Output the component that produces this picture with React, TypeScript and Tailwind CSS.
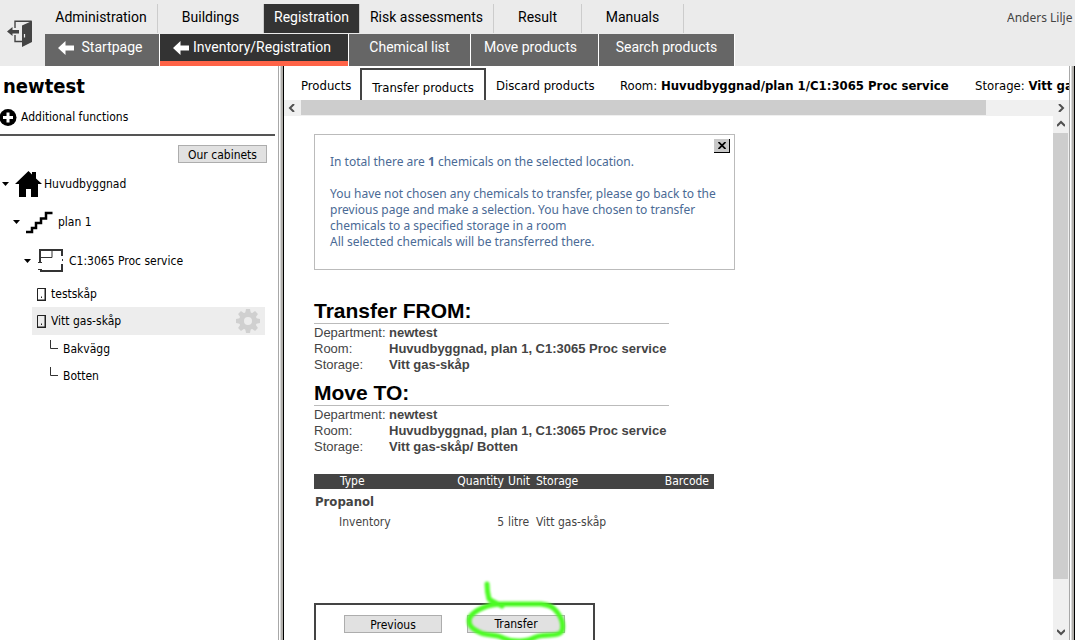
import clsx from "clsx";

const mainTabs = [
  { label: "Administration", width: "w-[113px]" },
  { label: "Buildings", width: "w-[106px]" },
  { label: "Registration", width: "w-[96px]", active: true },
  { label: "Risk assessments", width: "w-[134px]" },
  { label: "Result", width: "w-[88px]" },
  { label: "Manuals", width: "w-[102px]" },
];

const subTabs = [
  { label: "Startpage", width: "w-[115px]", arrow: "gap-2 pr-1" },
  {
    label: "Inventory/Registration",
    width: "w-[189px]",
    arrow: "gap-1 pr-1",
    active: true,
  },
  { label: "Chemical list", width: "w-[122px]" },
  { label: "Move products", width: "w-[128px] pr-2" },
  { label: "Search products", width: "w-[136px]" },
];

const transfers = [
  {
    title: "Transfer FROM:",
    rows: [
      ["Department:", "newtest"],
      ["Room:", "Huvudbyggnad, plan 1, C1:3065 Proc service"],
      ["Storage:", "Vitt gas-skåp"],
    ],
  },
  {
    title: "Move TO:",
    rows: [
      ["Department:", "newtest"],
      ["Room:", "Huvudbyggnad, plan 1, C1:3065 Proc service"],
      ["Storage:", "Vitt gas-skåp/ Botten"],
    ],
  },
];

const gearTeeth = [0, 45, 90, 135, 180, 225, 270, 315];

const ExitIcon = () => (
  <svg width="25" height="27" viewBox="0 0 25 27" fill="#444">
    <path
      d="M8 8V1.200h16V4M8 15v6.500h7"
      fill="none"
      stroke="#444"
      strokeWidth="1.400"
    />
    <path d="M15 5.500 25 1v21l-10 5z" />
    <path d="M0 11.500 5.500 7v3H12v3.500H5.500V16z" />
    <path d="M17.500 14v3.500" stroke="#eee" strokeWidth="1.200" />
  </svg>
);

const BackArrow = () => (
  <svg
    width="16"
    height="14"
    viewBox="0 0 16 14"
    fill="#fff"
    className="mt-1 shrink-0"
  >
    <path d="M0 7 7.500 0v4.500H16v5H7.500V14z" />
  </svg>
);

const PlusIcon = () => (
  <svg width="17" height="17" viewBox="0 0 17 17" className="shrink-0">
    <circle cx="8" cy="8.500" r="8.500" />
    <path d="M8 3.500v10M3 8.500h10" stroke="#fff" strokeWidth="3" />
  </svg>
);

const GearIcon = () => (
  <svg width="24" height="24" viewBox="0 0 24 24" fill="#d0d0d0">
    {gearTeeth.map((angle) => (
      <path
        key={angle}
        d="M9 5 10 0h4l1 5z"
        transform={`rotate(${angle} 12 12)`}
      />
    ))}
    <circle cx="12" cy="12" r="6.500" fill="none" stroke="#d0d0d0" strokeWidth="5" />
  </svg>
);

const HouseIcon = () => (
  <svg width="27" height="26" viewBox="0 0 27 26">
    <path d="M13.500 0 17 3.500V1h4v6.500l6 5.500h-4v13h-7v-8h-5v8H4V13H0z" />
  </svg>
);

const StairsIcon = () => (
  <svg width="27" height="23" viewBox="0 0 27 23">
    <path
      d="M0 21h6v-4h4v-5h5V7.500h5V2h6.500"
      fill="none"
      stroke="#000"
      strokeWidth="2.500"
    />
  </svg>
);

const RoomIcon = () => (
  <svg width="26" height="24" viewBox="0 0 26 24" fill="none" stroke="#333">
    <path d="M2 14V1h22v6M24 15v7H2" strokeWidth="2" />
    <path d="M2 8.500h12V2M0 13.500h4M0 20.500h4M24.500 10v2" />
  </svg>
);

const CabinetIcon = () => (
  <svg width="9" height="13" viewBox="0 0 9 13" fill="none" stroke="#222">
    <path d="M.5.5h7.500v11.500H.5z" />
    <path d="M8.500 0v12.500M0 12.500h9M4.500 8.500v1.500" />
  </svg>
);

const BranchIcon = () => (
  <svg width="8" height="9" viewBox="0 0 8 9" fill="none" stroke="#333">
    <path d="M.5 0v8.500H8" />
  </svg>
);

const Caret = () => (
  <svg width="7" height="4" viewBox="0 0 7 4">
    <path d="M0 0h7L3.500 4z" />
  </svg>
);

const Chevron = ({ d, label }: { d: string; label: string }) => (
  <button
    aria-label={label}
    className="flex size-4 shrink-0 items-center justify-center bg-[#f0f0f0]"
  >
    <svg width="8" height="8" viewBox="0 0 8 8" fill="none">
      <path d={d} stroke="#505050" strokeWidth="2" />
    </svg>
  </button>
);

const Header = () => (
  <header className="flex h-[66px] shrink-0 overflow-hidden bg-[#ebebeb] font-[Roboto,sans-serif] text-sm">
    <button aria-label="Log out" className="w-[45px] shrink-0 pl-[7px]">
      <ExitIcon />
    </button>
    <nav className="shrink-0 pt-1">
      <div className="flex h-[29px]">
        {mainTabs.map((tab) => (
          <a
            key={tab.label}
            href="#"
            className={clsx(
              "flex items-center justify-center border-r border-[#ccc] pb-1",
              tab.width,
              tab.active ? "bg-[#333] text-white" : "text-black"
            )}
          >
            {tab.label}
          </a>
        ))}
      </div>
      <div className="mt-px flex h-8">
        {subTabs.map((tab) => (
          <a
            key={tab.label}
            href="#"
            className={clsx(
              "flex items-start justify-center border-r border-white pt-[3px] text-white",
              tab.width,
              tab.arrow,
              tab.active
                ? "bg-[#333] shadow-[inset_0_-5px_0_#ff6347]"
                : "bg-[#666]"
            )}
          >
            {tab.arrow && <BackArrow />}
            {tab.label}
          </a>
        ))}
      </div>
    </nav>
    <div className="ml-auto w-[68px] overflow-hidden pt-[10px] font-[Noto_Sans,sans-serif] text-xs leading-4 whitespace-nowrap text-[#444]">
      Anders Lilje
    </div>
  </header>
);

const Sidebar = () => (
  <aside className="w-[278px] shrink-0">
    <h1 className="pt-2 pl-[3px] text-xl leading-6 font-bold">newtest</h1>
    <a href="#" className="mt-[11px] flex h-4 items-center gap-1">
      <PlusIcon />
      Additional functions
    </a>
    <hr className="mt-[9px] mr-[3px] border-t-2 border-[#555]" />
    <div className="flex justify-end pt-[9px] pr-[11px]">
      <button className="h-[18px] w-[89px] border border-[#adadad] bg-[#e1e1e1] leading-[18px]">
        Our cabinets
      </button>
    </div>
    <ul className="pt-0.5 pr-[13px]">
      <li className="flex h-[38px] items-center pl-0.5">
        <Caret />
        <span className="mr-0.5 ml-[6px]">
          <HouseIcon />
        </span>
        Huvudbyggnad
      </li>
      <li className="flex h-[38px] items-center pl-[13px]">
        <Caret />
        <span className="mr-[5px] ml-[6px]">
          <StairsIcon />
        </span>
        plan 1
      </li>
      <li className="flex h-10 items-center pl-6">
        <Caret />
        <span className="mr-[5px] ml-[7px]">
          <RoomIcon />
        </span>
        C1:3065 Proc service
      </li>
      <li className="flex h-[26px] items-center gap-[5px] pl-[37px]">
        <CabinetIcon />
        testskåp
      </li>
      <li className="ml-8 flex h-7 items-center gap-[5px] bg-[#ededed] pr-[5px] pl-[5px]">
        <CabinetIcon />
        Vitt gas-skåp
        <button aria-label="Settings" className="ml-auto">
          <GearIcon />
        </button>
      </li>
      <li className="flex h-7 items-center gap-[5px] pl-[50px]">
        <span className="mb-2.5">
          <BranchIcon />
        </span>
        Bakvägg
      </li>
      <li className="flex h-[26px] items-center gap-[5px] pl-[50px]">
        <span className="mb-2.5">
          <BranchIcon />
        </span>
        Botten
      </li>
    </ul>
  </aside>
);

const FrameEdge = () => (
  <div className="flex w-[6px] shrink-0 border-r border-black">
    <div className="w-px bg-[#a8a8a8]" />
    <div className="w-px bg-white" />
    <div className="w-px bg-[#d8d8d8]" />
    <div className="grow bg-[#b0aeaa]" />
  </div>
);

const ProductTabs = () => (
  <nav className="flex h-[34px] shrink-0 overflow-hidden text-[13px] whitespace-nowrap">
    <a href="#" className="w-[76px] shrink-0 pt-3 pl-[17px] leading-4">
      Products
    </a>
    <a
      href="#"
      className="mt-0.5 w-[126px] shrink-0 border-2 border-b-0 border-[#444] pt-[10px] text-center leading-4"
    >
      Transfer products
    </a>
    <a href="#" className="w-[134px] shrink-0 pt-3 pl-2.5 leading-4">
      Discard products
    </a>
    <span className="w-[355px] shrink-0 pt-3 leading-4">
      Room: <b>Huvudbyggnad/plan 1/C1:3065 Proc service</b>
    </span>
    <span className="shrink-0 pt-3 leading-4">
      Storage: <b>Vitt gas-skåp</b>
    </span>
  </nav>
);

const Message = () => (
  <div className="relative w-[421px] border border-[#bbb] pt-[19px] pr-1 pb-[19px] pl-[15px] font-['Noto_Sans',sans-serif] leading-4 text-[#4a6a95]">
    <p>
      In total there are <b>1</b> chemicals on the selected location.
    </p>
    <p className="mt-4">
      You have not chosen any chemicals to transfer, please go back to the
      <br />
      previous page and make a selection. You have chosen to transfer
      <br />
      chemicals to a specified storage in a room
      <br />
      All selected chemicals will be transferred there.
    </p>
    <button
      aria-label="Close"
      className="absolute top-1 right-1 flex h-[14px] w-4 items-center justify-center border-r border-b border-black bg-[#c8c8c8]"
    >
      <svg width="8" height="7" viewBox="0 0 8 7">
        <path d="m.5 0 7 7m0-7-7 7" stroke="#000" strokeWidth="1.700" />
      </svg>
    </button>
  </div>
);

const ProductTable = () => (
  <table className="mt-[19px] w-[400px] table-fixed text-left text-[#444]">
    <thead>
      <tr className="h-[15px] bg-[#444] leading-[15px] text-white">
        <th className="w-[130px] pl-[26px] font-normal">Type</th>
        <th className="w-[60px] text-right font-normal">Quantity</th>
        <th className="w-8 pl-1 font-normal">Unit</th>
        <th className="w-[100px] font-normal">Storage</th>
        <th className="pr-[5px] text-right font-normal">Barcode</th>
      </tr>
    </thead>
    <tbody>
      <tr className="h-[25px]">
        <td colSpan={5} className="pl-px text-[13px] font-bold">
          Propanol
        </td>
      </tr>
      <tr className="h-4 leading-4">
        <td className="pl-[25px]">Inventory</td>
        <td className="text-right">5</td>
        <td className="pl-1">litre</td>
        <td>Vitt gas-skåp</td>
        <td />
      </tr>
    </tbody>
  </table>
);

const Marker = () => (
  <svg
    className="pointer-events-none absolute -top-9 -left-1 blur-[1px]"
    width="106"
    height="64"
    viewBox="0 0 106 64"
    fill="none"
    stroke="#4cfb24"
    strokeWidth="5"
    strokeLinecap="round"
    strokeLinejoin="round"
  >
    <path d="M24 5c0 6 1 11 2 15 4 3 8 4 13 7" />
    <path d="M39 25C25 25 12 31 7 38c-3 8 2 12 11 16 7 3 15 1 22 5 11 5 26 3 33-1 8-3 23 0 26-6 2-7-1-14-5-19-4-6-9-7-16-8H39" />
  </svg>
);

const App = () => {
  return (
    <div className="flex h-screen flex-col overflow-hidden bg-white font-[DejaVu_Sans_Condensed,sans-serif] text-xs text-black">
      <Header />
      <div className="flex min-h-0 grow">
        <Sidebar />
        <FrameEdge />
        <main className="flex min-w-0 grow flex-col">
          <ProductTabs />
          <div className="flex h-4 shrink-0 bg-[#f0f0f0]">
            <Chevron label="Scroll left" d="M6 0 2 4l4 4" />
            <div className="ml-px min-w-0 grow pr-[67px]">
              <div className="h-[15px] bg-[#cdcdcd]" />
            </div>
            <Chevron label="Scroll right" d="m2 0 4 4-4 4" />
          </div>
          <div className="flex min-h-0 grow">
            <div className="min-w-0 grow overflow-hidden pt-[18px] pl-[30px]">
              <Message />
              <div className="mt-[30px] flex w-[355px] flex-col gap-[9px] font-['Liberation_Sans',sans-serif] text-[13px]">
                {transfers.map((transfer) => (
                  <section key={transfer.title}>
                    <h2 className="h-6 border-b border-[#bbb] text-[21px] leading-[22px] font-bold">
                      {transfer.title}
                    </h2>
                    <dl className="grid grid-cols-[75px_1fr] pt-px leading-4 whitespace-nowrap text-[#444]">
                      {transfer.rows.map(([name, value]) => (
                        <div key={name} className="contents">
                          <dt>{name}</dt>
                          <dd className="font-bold">{value}</dd>
                        </div>
                      ))}
                    </dl>
                  </section>
                ))}
              </div>
              <ProductTable />
              <div className="mt-[73px] flex h-14 w-[281px] items-start gap-[25px] border-2 border-[#444] pt-[10px] pl-7">
                <button className="h-[18px] w-[98px] border border-[#adadad] bg-[#e1e1e1] leading-[18px]">
                  Previous
                </button>
                <div className="relative">
                  <button className="block h-[18px] w-[98px] border border-[#adadad] bg-[#e1e1e1] leading-4">
                    Transfer
                  </button>
                  <Marker />
                </div>
              </div>
            </div>
            <div className="flex w-4 shrink-0 flex-col bg-[#f0f0f0]">
              <Chevron label="Scroll up" d="m0 6 4-4 4 4" />
              <div className="min-h-0 grow pt-px pb-[45px]">
                <div className="h-full w-[15px] bg-[#cdcdcd]" />
              </div>
              <Chevron label="Scroll down" d="m0 2 4 4 4-4" />
            </div>
          </div>
        </main>
        <FrameEdge />
      </div>
    </div>
  );
};

export default App;
